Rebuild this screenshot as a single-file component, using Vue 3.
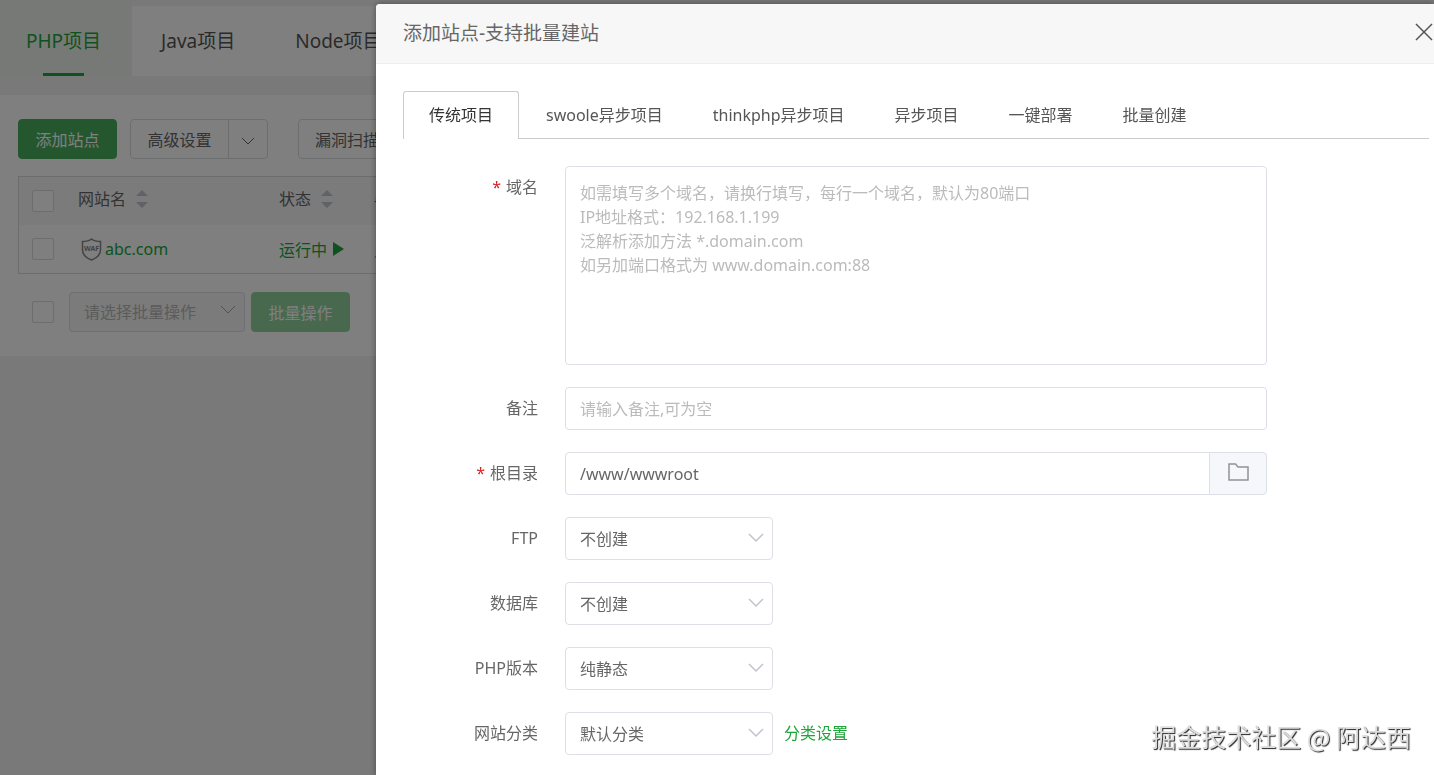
<template>
  <div class="page">
    <nav class="project-tabs">
      <a
        v-for="item in projectTabs"
        :key="item"
        href="#"
        class="project-tab"
        :class="{ active: item === activeProject }"
        @click.prevent="activeProject = item"
      >
        <span class="project-tab-text">{{ item }}</span>
      </a>
    </nav>

    <section class="panel">
      <div class="toolbar">
        <button type="button" class="btn btn-primary">添加站点</button>
        <div class="btn-group">
          <button type="button" class="btn btn-left">高级设置</button>
          <button type="button" class="btn btn-arrow" aria-label="更多设置">
            <svg width="14" height="8" viewBox="0 0 14 8">
              <path d="M1 1l6 6 6-6" fill="none" stroke="currentColor" />
            </svg>
          </button>
        </div>
        <button type="button" class="btn">漏洞扫描</button>
      </div>

      <div class="table-box">
        <table>
          <colgroup>
            <col class="col-check" />
            <col class="col-name" />
            <col class="col-status" />
            <col />
          </colgroup>
          <thead>
            <tr>
              <th><input type="checkbox" class="check" aria-label="全选" /></th>
              <th>
                <span class="sortable">
                  网站名
                  <svg width="12" height="18" viewBox="0 0 12 18">
                    <path d="M0 6l6-6 6 6zM0 12l6 6 6-6z" fill="#c0c4cc" />
                  </svg>
                </span>
              </th>
              <th>
                <span class="sortable">
                  状态
                  <svg width="12" height="18" viewBox="0 0 12 18">
                    <path d="M0 6l6-6 6 6zM0 12l6 6 6-6z" fill="#c0c4cc" />
                  </svg>
                </span>
              </th>
              <th>备份</th>
            </tr>
          </thead>
          <tbody>
            <tr v-for="site in sites" :key="site.name">
              <td>
                <input type="checkbox" class="check" :aria-label="site.name" />
              </td>
              <td>
                <a href="#" class="site-link">
                  <svg width="21" height="23" viewBox="0 0 21 23">
                    <path
                      d="M10.500 1C8 3 4.500 3.500 1.500 3.500V12c0 5 4 8 9 10 5-2 9-5 9-10V3.500C16.500 3.500 13 3 10.500 1z"
                      fill="none"
                      stroke="#888"
                      stroke-width="1.500"
                    />
                    <text x="10.500" y="13" class="waf">WAF</text>
                  </svg>
                  {{ site.name }}
                </a>
              </td>
              <td>
                <a href="#" class="status-link">
                  {{ site.status }}
                  <svg width="11" height="14" viewBox="0 0 11 14">
                    <path d="M0 0l11 7-11 7z" fill="currentColor" />
                  </svg>
                </a>
              </td>
              <td>{{ site.backup }}</td>
            </tr>
          </tbody>
        </table>
      </div>

      <div class="batch">
        <input type="checkbox" class="check" aria-label="选择全部站点" />
        <div class="select-box batch-select">
          <select disabled aria-label="批量操作">
            <option>请选择批量操作</option>
          </select>
          <svg class="chevron" width="16" height="10" viewBox="0 0 16 10">
            <path d="M1 1l7 7 7-7" fill="none" stroke="currentColor" />
          </svg>
        </div>
        <button type="button" class="btn btn-primary btn-off">批量操作</button>
      </div>
    </section>
  </div>

  <div class="mask"></div>

  <div class="dialog" role="dialog" aria-labelledby="dialog-title">
    <header class="dialog-header">
      <h2 id="dialog-title">添加站点-支持批量建站</h2>
      <button type="button" class="close" aria-label="关闭">
        <svg width="18" height="18" viewBox="0 0 18 18">
          <path
            d="M1 1l16 16M17 1L1 17"
            fill="none"
            stroke="currentColor"
            stroke-width="1.500"
          />
        </svg>
      </button>
    </header>

    <div class="dialog-body">
      <div class="tabs" role="tablist">
        <button
          v-for="tab in tabs"
          :key="tab"
          type="button"
          role="tab"
          class="tab"
          :class="{ active: tab === activeTab }"
          @click="activeTab = tab"
        >
          {{ tab }}
        </button>
      </div>

      <form class="form" @submit.prevent>
        <div class="form-row">
          <label for="domain" class="required">域名</label>
          <textarea
            id="domain"
            v-model="form.domain"
            :placeholder="domainTip"
          ></textarea>
        </div>
        <div class="form-row">
          <label for="remark">备注</label>
          <input
            id="remark"
            v-model="form.remark"
            type="text"
            class="field"
            placeholder="请输入备注,可为空"
          />
        </div>
        <div class="form-row">
          <label for="path" class="required">根目录</label>
          <div class="path-group">
            <input id="path" v-model="form.path" type="text" class="field" />
            <button type="button" class="folder" aria-label="选择目录">
              <svg width="21" height="18" viewBox="0 0 21 18">
                <path
                  d="M1 1h6.500l2.500 3h10v13H1z"
                  fill="none"
                  stroke="currentColor"
                  stroke-width="1.500"
                />
              </svg>
            </button>
          </div>
        </div>
        <div v-for="item in selects" :key="item.key" class="form-row">
          <label :for="item.key">{{ item.label }}</label>
          <div class="select-box">
            <select :id="item.key" v-model="form[item.key]">
              <option v-for="opt in item.options" :key="opt" :value="opt">
                {{ opt }}
              </option>
            </select>
            <svg class="chevron" width="16" height="10" viewBox="0 0 16 10">
              <path
                d="M1 1l7 7 7-7"
                fill="none"
                stroke="currentColor"
                stroke-width="1.500"
              />
            </svg>
          </div>
          <a v-if="item.link" href="#" class="form-link">{{ item.link }}</a>
        </div>
      </form>
    </div>
  </div>

  <div class="watermark">掘金技术社区 @ 阿达西</div>
</template>

<script setup>
import { reactive, ref } from "vue";

const projectTabs = ["PHP项目", "Java项目", "Node项目"];
const activeProject = ref("PHP项目");

const sites = [{ name: "abc.com", status: "运行中", backup: "点击备份" }];

const tabs = [
  "传统项目",
  "swoole异步项目",
  "thinkphp异步项目",
  "异步项目",
  "一键部署",
  "批量创建",
];
const activeTab = ref("传统项目");

const domainTip = [
  "如需填写多个域名，请换行填写，每行一个域名，默认为80端口",
  "IP地址格式：192.168.1.199",
  "泛解析添加方法 *.domain.com",
  "如另加端口格式为 www.domain.com:88",
].join("\n");

const selects = [
  { key: "ftp", label: "FTP", options: ["不创建", "创建"] },
  { key: "database", label: "数据库", options: ["不创建", "MySQL"] },
  { key: "version", label: "PHP版本", options: ["纯静态"] },
  {
    key: "type",
    label: "网站分类",
    options: ["默认分类"],
    link: "分类设置",
  },
];

const form = reactive({
  domain: "",
  remark: "",
  path: "/www/wwwroot",
  ftp: "不创建",
  database: "不创建",
  version: "纯静态",
  type: "默认分类",
});
</script>

<style>
body {
  margin: 0;
  overflow: hidden;
  background: #f2f2f2;
  font-family: "Noto Sans", "Noto Sans CJK SC", sans-serif;
  font-size: 16px;
  color: #666;
}
</style>

<style scoped>
* {
  box-sizing: border-box;
}

button,
input,
select,
textarea {
  font: inherit;
  color: inherit;
  margin: 0;
  outline: none;
}

button {
  cursor: pointer;
}

a {
  color: #20a53a;
  text-decoration: none;
}

svg {
  flex: none;
}

.page {
  min-height: 100vh;
}

.project-tabs {
  display: flex;
  height: 76px;
  padding-top: 6px;
  margin-bottom: 19px;
  background: linear-gradient(#f2f2f2 6px, #fff 6px);
  font-size: 19px;
}

.project-tab {
  display: flex;
  align-items: center;
  padding: 0 31px 0 29px;
  color: #555;
  white-space: nowrap;
}

.project-tab:first-child {
  padding-left: 26px;
}

.project-tab.active {
  height: 76px;
  margin-top: -6px;
  padding-top: 6px;
  background: #eef3ef;
  color: #20a53a;
}

.project-tab-text {
  position: relative;
  line-height: 70px;
}

.active .project-tab-text::after {
  content: "";
  position: absolute;
  left: 50%;
  bottom: 0;
  width: 41px;
  height: 3px;
  margin-left: -21px;
  background: #20a53a;
}

.panel {
  padding: 24px 18px;
  background: #fff;
}

.toolbar {
  display: flex;
  margin-bottom: 17px;
}

.btn {
  height: 40px;
  padding: 0 16px;
  border: 1px solid #d8dade;
  border-radius: 4px;
  background: #fff;
  white-space: nowrap;
}

.btn-primary {
  min-width: 99px;
  border-color: #48ae5c;
  background: #48ae5c;
  color: #fff;
}

.btn-off {
  border-color: #90d29d;
  background: #90d29d;
}

.btn-group {
  display: flex;
  margin: 0 30px 0 13px;
}

.btn-left {
  min-width: 99px;
  border-radius: 4px 0 0 4px;
}

.btn-arrow {
  width: 40px;
  margin-left: -1px;
  padding: 0 12px;
  border-radius: 0 4px 4px 0;
}

.table-box {
  border: 1px solid #d8d8d8;
}

table {
  width: 100%;
  table-layout: fixed;
  border-collapse: collapse;
}

th,
td {
  height: 48px;
  padding: 0;
  font-weight: 400;
  text-align: left;
  white-space: nowrap;
}

thead {
  background: #f6f6f6;
}

th:first-child,
td:first-child {
  padding-left: 13px;
}

.col-check {
  width: 59px;
}

.col-name {
  width: 201px;
}

.col-status {
  width: 95px;
}

.check {
  display: block;
  width: 22px;
  height: 22px;
  appearance: none;
  border: 1px solid #d8dade;
  border-radius: 2px;
  background: #fff;
}

.sortable {
  display: flex;
  align-items: center;
  gap: 10px;
  padding-bottom: 4px;
  line-height: 24px;
}

.site-link {
  display: flex;
  align-items: center;
  gap: 3px;
  padding-left: 3px;
}

.waf {
  font-size: 7px;
  font-weight: 700;
  fill: #888;
  text-anchor: middle;
}

.status-link {
  display: flex;
  align-items: center;
  gap: 6px;
}

.batch {
  display: flex;
  align-items: center;
  padding: 18px 0 0 14px;
}

.select-box {
  position: relative;
  width: 208px;
  height: 43px;
}

.select-box select {
  width: 100%;
  height: 100%;
  padding: 0 14px;
  appearance: none;
  border: 1px solid #dcdfe6;
  border-radius: 4px;
  background: #fff;
  opacity: 1;
}

.batch-select {
  width: 176px;
  height: 40px;
  margin: 0 6px 0 15px;
}

.batch-select select {
  background: #f6f6f6;
  color: #b8b8b8;
}

.chevron {
  position: absolute;
  top: 16px;
  right: 9px;
  color: #c0c4cc;
  pointer-events: none;
}

.batch-select .chevron {
  top: 13px;
  color: #a0a3aa;
}

.mask {
  position: fixed;
  inset: 0;
  background: rgba(0, 0, 0, 0.5);
}

.dialog {
  position: fixed;
  inset: 4px 0 0 376px;
  overflow: hidden;
  border-radius: 4px 0 0 0;
  background: #fff;
  box-shadow: 0 0 6px rgba(0, 0, 0, 0.4);
}

.dialog-header {
  display: flex;
  align-items: center;
  justify-content: space-between;
  height: 60px;
  padding: 0 1px 4px 27px;
  border-bottom: 1px solid #eee;
  background: #f7f7f7;
}

.dialog-header h2 {
  margin: 0;
  font-size: 19px;
  font-weight: 400;
}

.close {
  display: flex;
  padding: 0;
  border: 0;
  background: none;
  color: #555;
}

.dialog-body {
  padding: 27px 5px 0 27px;
}

.tabs {
  display: flex;
  height: 48px;
  margin-bottom: 27px;
  box-shadow: inset 0 -1px #ccc;
}

.tab {
  padding: 0 24px 3px;
  border: 1px solid transparent;
  border-bottom: 0;
  background: none;
  color: #555;
  white-space: nowrap;
}

.tab.active {
  margin-right: 2px;
  padding: 0 25px 3px;
  border-color: #ccc;
  border-radius: 3px 3px 0 0;
  background: #fff;
  color: #333;
}

.form {
  display: flex;
  flex-direction: column;
  gap: 22px;
}

.form-row {
  display: flex;
}

.form-row label {
  flex: none;
  width: 135px;
  margin-right: 27px;
  line-height: 43px;
  text-align: right;
}

.required::before {
  content: "*";
  margin-right: 5px;
  color: #e02020;
}

textarea,
.field {
  width: 702px;
  padding: 0 14px;
  border: 1px solid #dcdfe6;
  border-radius: 4px;
  background: #fff;
}

.field {
  height: 43px;
}

textarea {
  display: block;
  height: 199px;
  padding: 14px;
  line-height: 24px;
  resize: none;
}

textarea::placeholder,
.field::placeholder {
  color: #bbb;
}

.path-group {
  display: flex;
  width: 702px;
}

.path-group .field {
  flex: 1;
  width: auto;
  border-radius: 4px 0 0 4px;
}

.folder {
  display: flex;
  align-items: center;
  justify-content: center;
  width: 58px;
  height: 43px;
  margin-left: -1px;
  padding: 0 0 3px;
  border: 1px solid #dcdfe6;
  border-radius: 0 4px 4px 0;
  background: #f5f7fa;
  color: #909399;
}

.form-link {
  margin-left: 11px;
  line-height: 43px;
}

.watermark {
  position: fixed;
  right: 23px;
  bottom: 21px;
  font-family: "Noto Sans CJK SC", sans-serif;
  font-size: 25px;
  line-height: 36px;
  color: #ddd;
  text-shadow: 1px 1px 1px #222;
}
</style>
